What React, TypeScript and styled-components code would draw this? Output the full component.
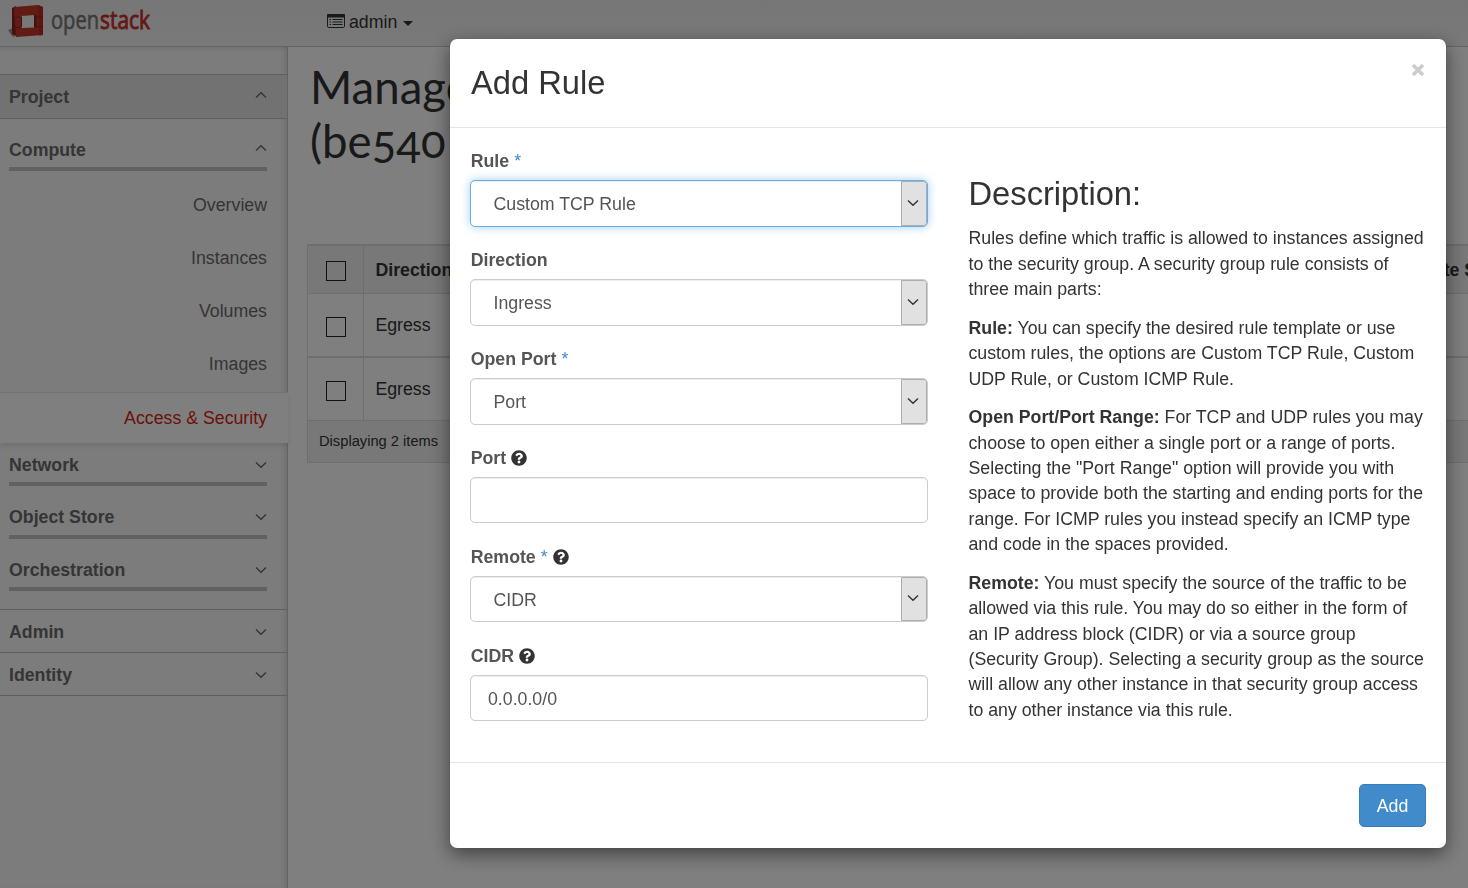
import React from "react";
import styled, { createGlobalStyle, css } from "styled-components";
import { FaQuestionCircle } from "react-icons/fa";

const GlobalStyle = createGlobalStyle`
  *, *::before, *::after { box-sizing: border-box; }
  html, body { margin: 0; height: 100%; overflow: hidden; background: #fff; }
  body {
    font-family: "Liberation Sans", Arial, Helvetica, sans-serif;
    font-size: 17.74px;
    line-height: 25.34px;
    color: #333;
  }
`;

const Page = styled.div`
  width: 100vw;
  height: 100vh;
  display: flex;
  flex-direction: column;
  overflow: hidden;
`;

const TopBar = styled.header`
  flex: none;
  height: 47px;
  display: flex;
  align-items: flex-start;
  background: linear-gradient(#ededed, #f3f3f3);
  border-bottom: 1px solid #c9c9c9;
`;

const Logo = styled.svg`
  flex: none;
  width: 327px;
  height: 46px;
`;

const ProjectMenu = styled.div`
  display: flex;
  align-items: center;
  height: 44px;
  padding-top: 1px;
  gap: 4px;
  color: #333;
  svg { margin-top: -3px; }
`;

const Caret = styled.i`
  border: 5px solid transparent;
  border-top-color: #333;
  border-bottom: 0;
  margin: 2px 0 0 2px;
`;

const Body = styled.div`
  flex: 1;
  display: flex;
  min-height: 0;
`;

const Sidebar = styled.nav`
  flex: none;
  width: 288px;
  padding-top: 27px;
  background: #f9f9f9;
  border-right: 1px solid #c4c4c4;
  box-shadow: inset -5px 0 6px -3px rgba(0, 0, 0, 0.12), inset 0 7px 6px -5px rgba(0, 0, 0, 0.08);
  color: #6a6a6a;
`;

const PanelHead = styled.div<{ $open?: boolean; $first?: boolean }>`
  display: flex;
  justify-content: space-between;
  align-items: center;
  height: 43px;
  padding: 3px 20px 0 9px;
  font-weight: bold;
  border-bottom: 1px solid #bcbcbc;
  ${(p) => p.$first && css`border-top: 1px solid #bcbcbc;`}
  ${(p) => p.$open && css`height: 45px; padding-top: 2px; background: #e4e4e4;`}
`;

const Groups = styled.div`
  height: 491px;
  display: flex;
  flex-direction: column;
  border-bottom: 1px solid #bcbcbc;
`;

const GroupHead = styled.div<{ $before: number; $gap: number }>`
  display: flex;
  justify-content: space-between;
  align-items: center;
  margin: ${(p) => p.$before}px 20px 0 9px;
  padding-bottom: ${(p) => p.$gap}px;
  border-bottom: 4px solid #c0c3c1;
  line-height: 25px;
  font-weight: bold;
`;

const Links = styled.div`
  display: flex;
  flex-direction: column;
  padding-top: 8px;
`;

const Link = styled.div<{ $active?: boolean }>`
  height: 53px;
  padding: 0 20px;
  line-height: 53px;
  text-align: right;
  ${(p) =>
    p.$active &&
    css`
      height: 51px;
      margin: 1px -1px 0 0;
      line-height: 51px;
      padding-right: 21px;
      background: #fff;
      border-top: 1px solid #e6e6e6;
      color: #d9230f;
      box-shadow: 0 3px 5px rgba(0, 0, 0, 0.1);
    `}
`;

const Chevron = styled.svg<{ $up?: boolean }>`
  width: 12px;
  height: 8px;
  fill: none;
  stroke: currentColor;
  stroke-width: 1.4;
  margin-top: ${(p) => (p.$up ? "-6px" : "-2px")};
  transform: ${(p) => (p.$up ? "rotate(180deg)" : "none")};
`;

const Main = styled.main`
  flex: 1;
  min-width: 0;
  padding: 12px 0 0 19px;
  overflow: hidden;
`;

const Title = styled.h1`
  margin: 0 0 76px;
  padding-left: 3px;
  height: 109px;
  font: 400 47px/54px Lato, "Open Sans", sans-serif;
  font-feature-settings: "onum";
  color: #333;
  transform: scaleX(0.97);
  transform-origin: left;
`;

const Table = styled.section`
  width: 1300px;
  border: 1px solid #dcdcdc;
  border-top-width: 2px;
`;

const TableRow = styled.div<{ $head?: boolean; $height: number; $line: number }>`
  display: grid;
  grid-template-columns: 55px 1020px 1fr;
  height: ${(p) => p.$height}px;
  border-bottom: ${(p) => p.$line}px solid #dcdcdc;
  background: ${(p) => (p.$head ? "#f1f1f1" : "#fff")};
  font-weight: ${(p) => (p.$head ? "bold" : "normal")};
`;

const Cell = styled.div`
  display: flex;
  align-items: center;
  padding: 2px 11.4px 0;
  white-space: nowrap;
  & + & { border-left: 1px solid #dcdcdc; }
  & + & + & { border-left: 0; }
`;

const Checkbox = styled.span`
  width: 20px;
  height: 20px;
  margin: 1px 0 0 6.6px;
  border: 1px solid #222;
`;

const TableFoot = styled.div`
  height: 41px;
  padding-left: 11px;
  line-height: 41px;
  font-size: 14.7px;
  background: #f1f1f1;
`;

const Backdrop = styled.div`
  position: fixed;
  inset: 0;
  background: rgba(0, 0, 0, 0.5);
`;

const Dialog = styled.div`
  position: fixed;
  left: 450px;
  top: 39px;
  width: 996px;
  height: 809px;
  display: flex;
  flex-direction: column;
  background: #fff;
  border-radius: 7px;
  box-shadow: 0 6px 19px rgba(0, 0, 0, 0.5), 0 0 1px rgba(0, 0, 0, 0.4);
`;

const DialogHeader = styled.div`
  flex: none;
  height: 89px;
  display: flex;
  justify-content: space-between;
  padding: 25px 20px 0 21px;
  border-bottom: 1px solid #e5e5e5;
`;

const Heading = styled.h3`
  margin: 0;
  font-size: 32.7px;
  line-height: 37px;
  font-weight: 400;
  color: #333;
`;

const Close = styled.button`
  height: 14px;
  width: 15px;
  padding: 0;
  border: 0;
  background: none;
  svg { display: block; width: 14px; height: 14px; margin-top: -2px; stroke: #ccc; stroke-width: 3.6; }
`;

const DialogBody = styled.div`
  flex: 1;
  display: grid;
  grid-template-columns: 458px 458px;
  column-gap: 40px;
  padding: 21px 20px 0;
`;

const Field = styled.div`
  height: 99px;
`;

const Label = styled.label`
  display: flex;
  align-items: center;
  gap: 5px;
  height: 25px;
  margin-bottom: 6px;
  padding-left: 0.7px;
  font-weight: bold;
  color: #555;
  svg { width: 16px; height: 16px; margin-top: -2px; color: #333; }
`;

const Required = styled.span`
  font-weight: 400;
  color: #428bca;
`;

const control = css`
  width: 458px;
  border: 1px solid #ccc;
  border-radius: 5px;
  background: #fff;
  box-shadow: inset 0 1px 1px rgba(0, 0, 0, 0.075);
  color: #555;
`;

const SelectBox = styled.div<{ $focused?: boolean; $short?: boolean }>`
  ${control}
  height: ${(p) => (p.$short ? 46 : 47)}px;
  display: flex;
  justify-content: space-between;
  align-items: center;
  padding-left: 22.5px;
  overflow: hidden;
  ${(p) =>
    p.$focused &&
    css`
      border-color: #66afe9;
      box-shadow: inset 0 1px 1px rgba(0, 0, 0, 0.075), 0 0 10px rgba(102, 175, 233, 0.6);
    `}
`;

const SelectText = styled.span<{ $short?: boolean }>`
  padding-top: ${(p) => (p.$short ? 3 : 2)}px;
`;

const SelectArrow = styled.span`
  align-self: stretch;
  width: 26px;
  display: flex;
  align-items: center;
  justify-content: center;
  padding-right: 2px;
  background: #e1e1e1;
  border: 1px solid #adadad;
  border-radius: 0 3px 3px 0;
  color: #333;
`;

const Input = styled.input`
  ${control}
  display: block;
  height: 46px;
  padding: 2px 17px 0;
  font: inherit;
  outline: 0;
`;

const Description = styled.div`
  padding: 26px 0 0 0;
  white-space: nowrap;
  p { margin: 0 0 13.5px; padding-left: 0.5px; }
`;

const DescriptionTitle = styled(Heading)`
  margin-bottom: 14.3px;
  padding-left: 0.5px;
`;

const DialogFooter = styled.div`
  flex: none;
  height: 86px;
  display: flex;
  justify-content: flex-end;
  padding: 21px 20px;
  border-top: 1px solid #e5e5e5;
`;

const AddButton = styled.button`
  width: 67px;
  height: 43px;
  padding: 2px 0 0;
  border: 1px solid #357ebd;
  border-radius: 5px;
  background: #428bca;
  color: #fff;
  font: inherit;
`;

const Arrow = ({ up }: { up?: boolean }) => (
  <Chevron $up={up} viewBox="0 0 12 8"><path d="M1 1.5 6 6.3 11 1.5" /></Chevron>
);

const ListIcon = () => (
  <svg width="18" height="14" viewBox="0 0 18 14">
    <rect x="0.5" y="0.5" width="17" height="13" rx="1.2" fill="none" stroke="#333" />
    <path d="M0 1a1 1 0 0 1 1-1h16a1 1 0 0 1 1 1v2.5H0z" fill="#333" />
    <path d="M2.5 5.5h1.5M2.5 8h1.5M2.5 10.5h1.5M5.5 5.5h10M5.5 8h10M5.5 10.5h10" stroke="#333" />
  </svg>
);

const OpenStackLogo = () => (
  <Logo viewBox="0 0 327 46">
    <path d="M8 30 13 28 15 37 12 36Z" fill="#999" />
    <path d="M12 8 16 6 16 36 12 34Z" fill="#8d231a" />
    <path fillRule="evenodd" d="M14 7 38 5 43 7V35L16 37ZM21 16V28L35 27.5V15Z" fill="#c5382c" />
    <path d="M38 5 43 7V35L39 35.5Z" fill="#bd2b20" />
    <path d="M21 16V28L22 27V17ZM34 15 36.5 14V28L34 27.5Z" fill="#8b1e16" />
    <path d="M14 17H21M35 17H43M14 27.5H21M36 26.5H43" stroke="#922219" strokeWidth="0.8" />
    <g fontFamily="Open Sans, sans-serif" fontSize="26">
      <text x="51" y="29" textLength="48" lengthAdjust="spacingAndGlyphs" fill="#777" stroke="#777" strokeWidth="0.6">open</text>
      <text x="100" y="29" textLength="50" lengthAdjust="spacingAndGlyphs" fill="#c9302c" stroke="#c9302c" strokeWidth="0.9">stack</text>
    </g>
  </Logo>
);

const fields = [
  { label: "Rule", required: true, value: "Custom TCP Rule", select: true, focused: true },
  { label: "Direction", value: "Ingress", select: true },
  { label: "Open Port", required: true, value: "Port", select: true },
  { label: "Port", help: true, value: "" },
  { label: "Remote", required: true, help: true, value: "CIDR", select: true, short: true },
  { label: "CIDR", help: true, value: "0.0.0.0/0" },
];

export default function App() {
  return (
    <>
      <GlobalStyle />
      <Page>
        <TopBar>
          <OpenStackLogo />
          <ProjectMenu><ListIcon />admin<Caret /></ProjectMenu>
        </TopBar>
        <Body>
          <Sidebar>
            <PanelHead $first $open>Project<Arrow up /></PanelHead>
            <Groups>
              <GroupHead $before={19} $gap={4}>Compute<Arrow up /></GroupHead>
              <Links>
                {["Overview", "Instances", "Volumes", "Images"].map((name) => (
                  <Link key={name}>{name}</Link>
                ))}
                <Link $active>Access &amp; Security</Link>
              </Links>
              <GroupHead $before={10} $gap={4}>Network<Arrow /></GroupHead>
              <GroupHead $before={19} $gap={5}>Object Store<Arrow /></GroupHead>
              <GroupHead $before={19} $gap={4}>Orchestration<Arrow /></GroupHead>
            </Groups>
            <PanelHead>Admin<Arrow /></PanelHead>
            <PanelHead>Identity<Arrow /></PanelHead>
          </Sidebar>
          <Main>
            <Title>Manage<br />(be540</Title>
            <Table>
              <TableRow $head $height={48} $line={1}>
                <Cell><Checkbox /></Cell>
                <Cell>Direction</Cell>
                <Cell>Remote Security Group</Cell>
              </TableRow>
              <TableRow $height={64} $line={2}>
                <Cell><Checkbox /></Cell>
                <Cell>Egress</Cell>
              </TableRow>
              <TableRow $height={63} $line={1}>
                <Cell><Checkbox /></Cell>
                <Cell>Egress</Cell>
              </TableRow>
              <TableFoot>Displaying 2 items</TableFoot>
            </Table>
          </Main>
        </Body>
      </Page>
      <Backdrop />
      <Dialog role="dialog">
        <DialogHeader>
          <Heading>Add Rule</Heading>
          <Close aria-label="Close">
            <svg viewBox="0 0 14 14"><path d="M2 2 12 12M12 2 2 12" /></svg>
          </Close>
        </DialogHeader>
        <DialogBody>
          <div>
            {fields.map((f) => (
              <Field key={f.label}>
                <Label>
                  {f.label}
                  {f.required && <Required>*</Required>}
                  {f.help && <FaQuestionCircle />}
                </Label>
                {f.select ? (
                  <SelectBox $focused={f.focused} $short={f.short}>
                    <SelectText $short={f.short}>{f.value}</SelectText>
                    <SelectArrow><Arrow /></SelectArrow>
                  </SelectBox>
                ) : (
                  <Input defaultValue={f.value} />
                )}
              </Field>
            ))}
          </div>
          <Description>
            <DescriptionTitle>Description:</DescriptionTitle>
            <p>
              Rules define which traffic is allowed to instances assigned<br />
              to the security group. A security group rule consists of<br />
              three main parts:
            </p>
            <p>
              <b>Rule:</b> You can specify the desired rule template or use<br />
              custom rules, the options are Custom TCP Rule, Custom<br />
              UDP Rule, or Custom ICMP Rule.
            </p>
            <p>
              <b>Open Port/Port Range:</b> For TCP and UDP rules you may<br />
              choose to open either a single port or a range of ports.<br />
              Selecting the "Port Range" option will provide you with<br />
              space to provide both the starting and ending ports for the<br />
              range. For ICMP rules you instead specify an ICMP type<br />
              and code in the spaces provided.
            </p>
            <p>
              <b>Remote:</b> You must specify the source of the traffic to be<br />
              allowed via this rule. You may do so either in the form of<br />
              an IP address block (CIDR) or via a source group<br />
              (Security Group). Selecting a security group as the source<br />
              will allow any other instance in that security group access<br />
              to any other instance via this rule.
            </p>
          </Description>
        </DialogBody>
        <DialogFooter><AddButton>Add</AddButton></DialogFooter>
      </Dialog>
    </>
  );
}
